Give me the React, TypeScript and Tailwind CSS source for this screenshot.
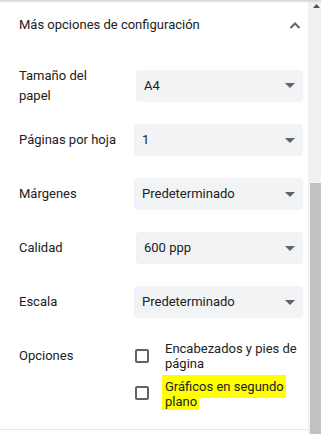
import React from "react";

const Caret = () => (
  <svg width="10" height="5" viewBox="0 0 10 5" className="shrink-0">
    <path d="M0 0 L10 0 L5 5 Z" fill="#5f6368" />
  </svg>
);

function Select({ value, shift }: { value: string; shift?: boolean }) {
  return (
    <div
      className={
        "flex-1 h-[32px] rounded-[4px] bg-[#f1f3f4] flex items-center justify-between pl-[8px] pr-[8px] " +
        (shift ? "ml-[2px]" : "")
      }
    >
      <span className="text-[13px] text-[#202124]">{value}</span>
      <Caret />
    </div>
  );
}

function Row({
  label,
  value,
  h,
  shift,
}: {
  label: string;
  value: string;
  h: string;
  shift?: boolean;
}) {
  return (
    <div className={"flex items-center pl-[19px] pr-[5px] " + h}>
      <div className="w-[115px] pr-[16px] text-[13px] leading-[20px] text-[#202124]">
        {label}
      </div>
      <Select value={value} shift={shift} />
    </div>
  );
}

const Box = () => (
  <div className="w-[14px] h-[14px] border-2 border-[#5f6368] rounded-[2px] shrink-0" />
);

export default function App() {
  return (
    <div
      className="relative w-[321px] h-[434px] overflow-hidden flex bg-white"
      style={{ fontFamily: "Roboto, 'Liberation Sans', sans-serif" }}
    >
      <div className="absolute left-0 top-0 w-full h-[3px] bg-gradient-to-b from-[#cfcfcf] to-transparent pointer-events-none" />
      <div className="w-[308px] flex flex-col">
        <div className="h-[50px] flex items-center justify-between pl-[19px] pr-[7px]">
          <span className="text-[13px] text-[#202124]">Más opciones de configuración</span>
          <svg width="12" height="8" viewBox="0 0 12 8">
            <path d="M1.5 7 L6 2.5 L10.5 7" stroke="#5f6368" strokeWidth="2" fill="none" />
          </svg>
        </div>
        <div className="pt-[8px] flex flex-col">
          <Row label="Tamaño del papel" value="A4" h="h-[55px]" shift />
          <Row label="Páginas por hoja" value="1" h="h-[54px]" />
          <Row label="Márgenes" value="Predeterminado" h="h-[54px]" />
          <Row label="Calidad" value="600 ppp" h="h-[54px]" shift />
          <Row label="Escala" value="Predeterminado" h="h-[54px]" />
        </div>
        <div className="pt-[12px] flex pl-[19px] text-[13px] text-[#202124]">
          <div className="w-[116px] h-[30px] flex items-center">Opciones</div>
          <div className="flex flex-col gap-[4px]">
            <div className="flex items-center gap-[16px]">
              <Box />
              <div className="leading-[15px] w-[135px]">Encabezados y pies de página</div>
            </div>
            <div className="flex items-center gap-[13px]">
              <Box />
              <div className="flex flex-col">
                <div className="w-fit bg-[#ffff00] h-[23px] leading-[23px] pl-[3px] pr-[2px]">
                  Gráficos en segundo
                </div>
                <div className="w-fit bg-[#ffff00] h-[12px] leading-[7px] pl-[3px] pr-[2px]">
                  plano
                </div>
              </div>
            </div>
          </div>
        </div>
        <div className="mt-[19px] border-t border-[#e6e6e6]" />
      </div>
      <div className="w-[13px] h-full bg-[#f1f1f1] flex flex-col">
        <div className="h-[15px] flex items-start pt-[4px] pl-[5px]">
          <svg width="7" height="4" viewBox="0 0 7 4">
            <path d="M0 4 L3.5 0 L7 4 Z" fill="#505050" />
          </svg>
        </div>
        <div className="mt-[168px] ml-[2px] flex-1 bg-[#c1c1c1]" />
      </div>
    </div>
  );
}
